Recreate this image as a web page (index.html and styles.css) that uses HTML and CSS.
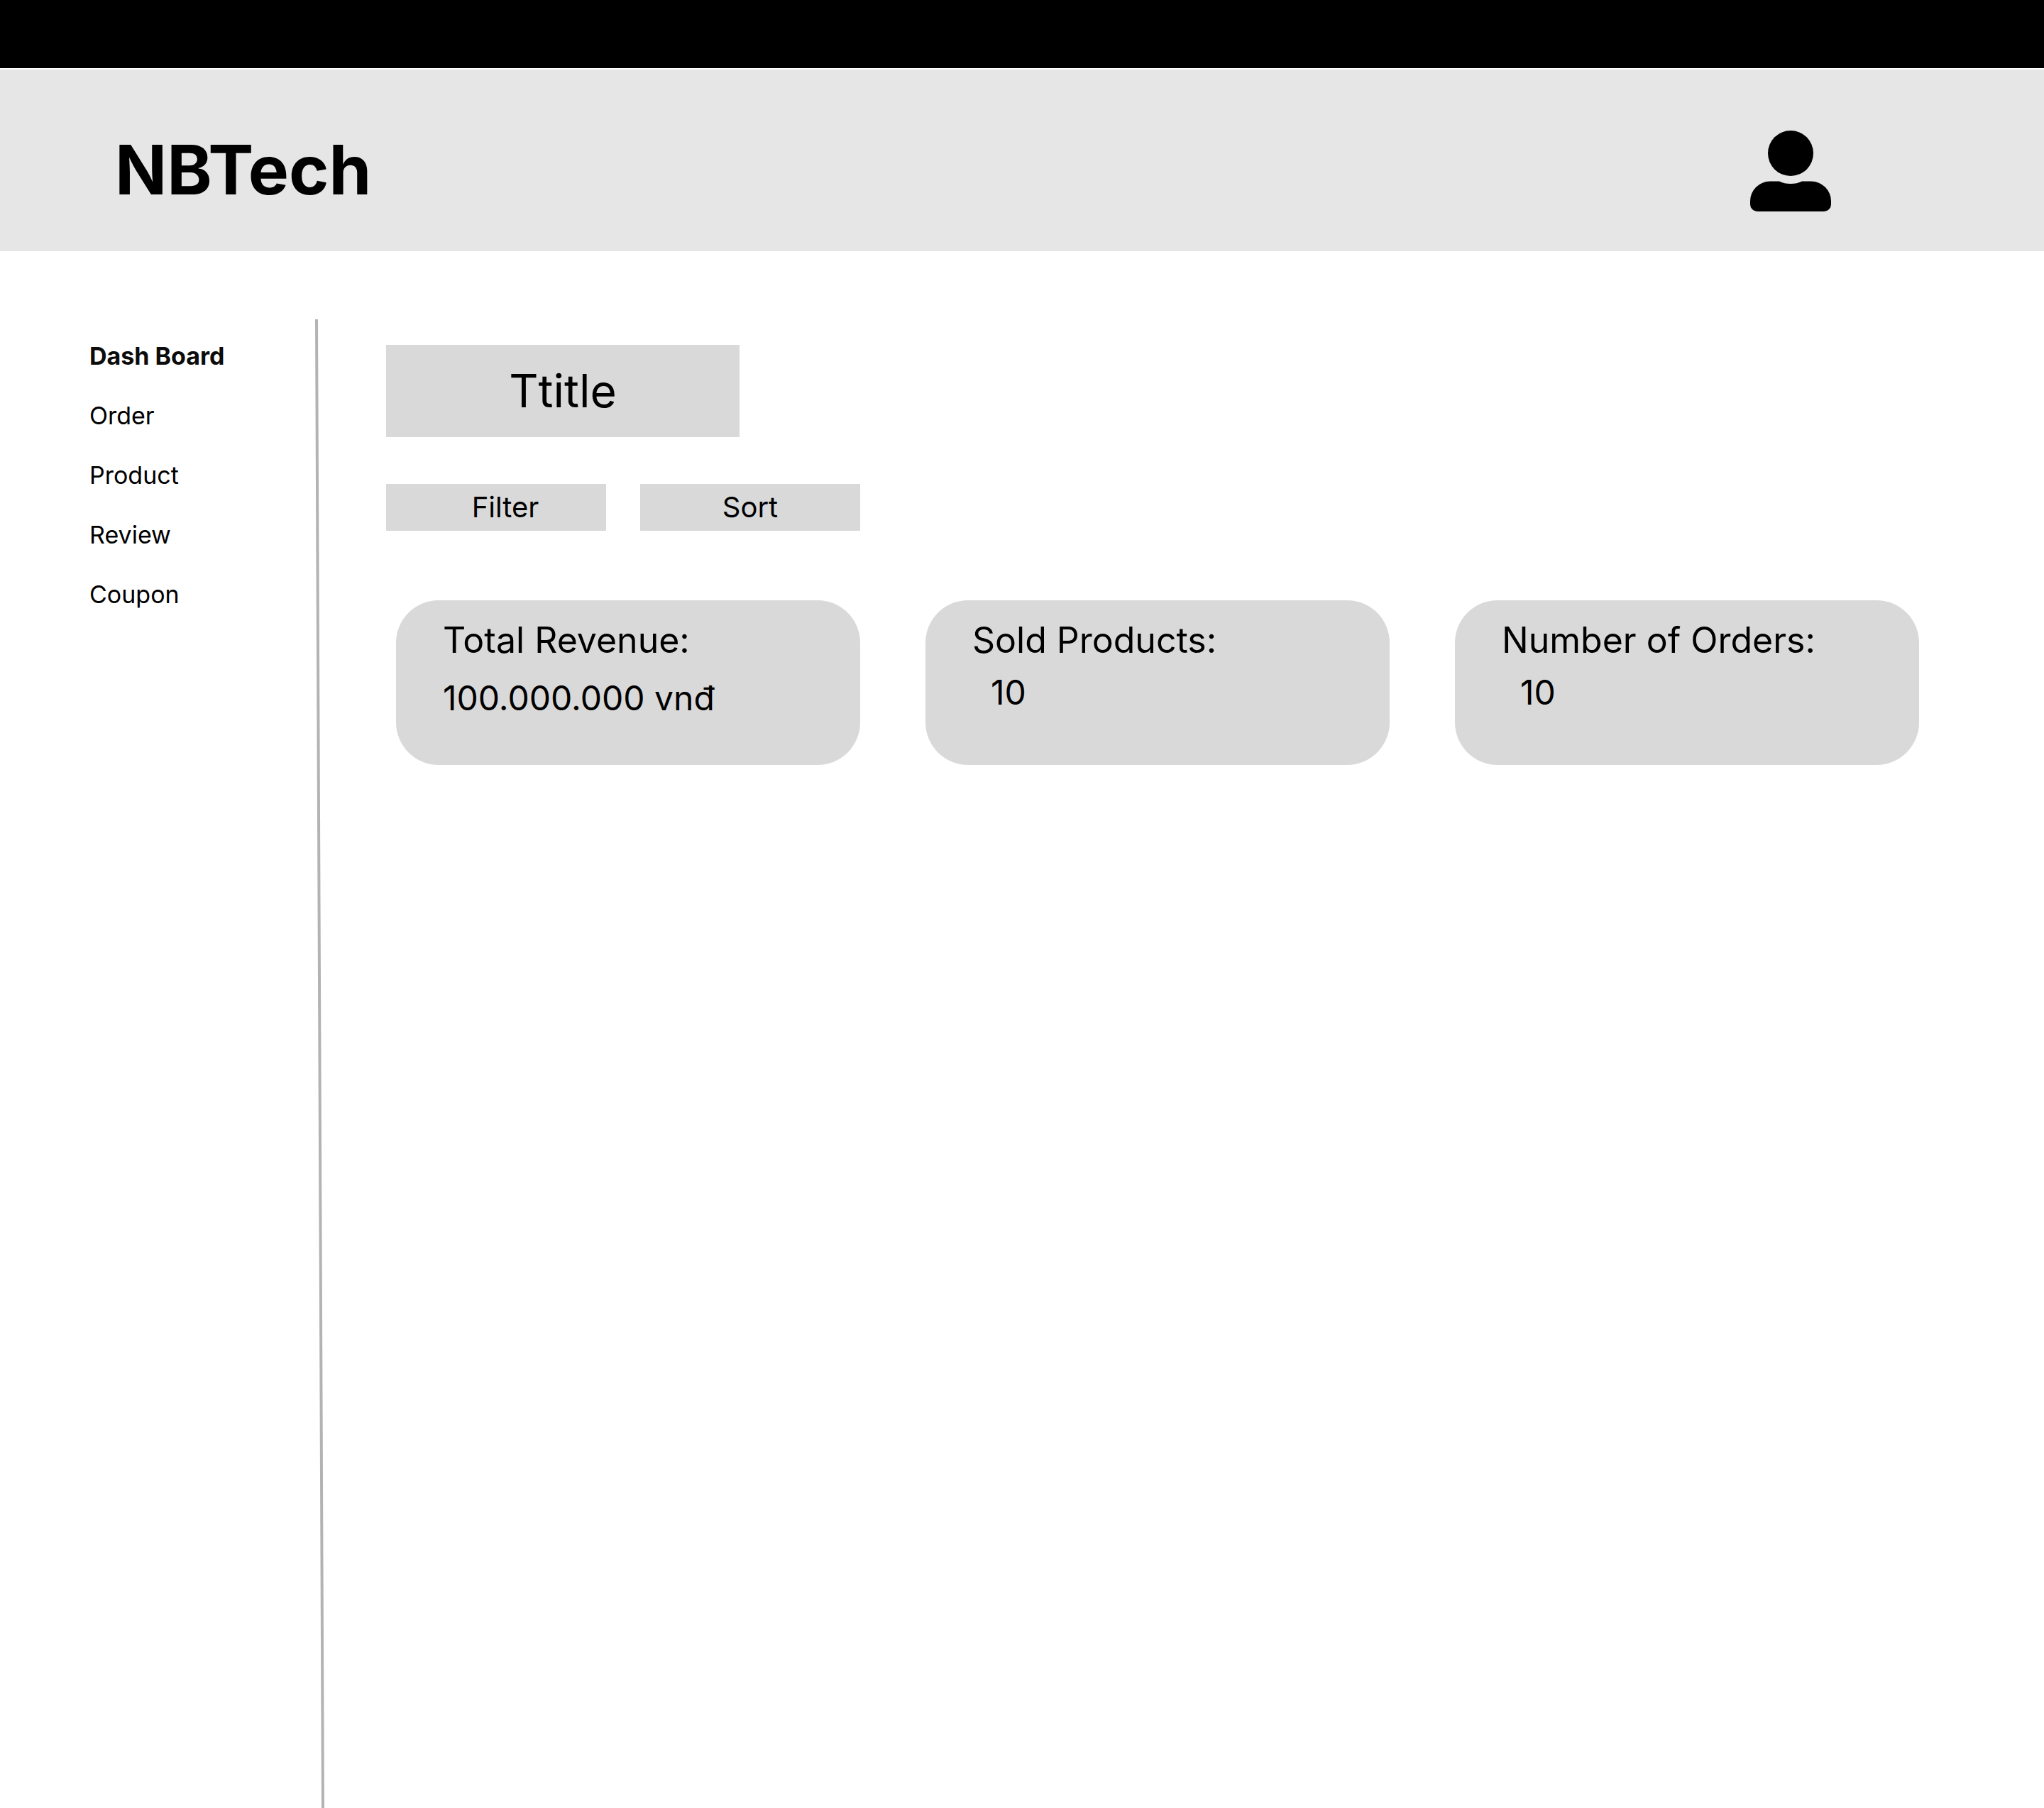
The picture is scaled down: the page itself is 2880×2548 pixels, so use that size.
FILE: index.html
```html
<!DOCTYPE html>
<html lang="en">
<head>
  <meta charset="utf-8">
  <meta name="viewport" content="width=device-width, initial-scale=1">
  <title>NBTech</title>
  <link rel="stylesheet" href="styles.css">
</head>
<body>
  <div class="topbar"></div>
  <header class="header">
    <a class="brand" href="#">NBTech</a>
    <button class="account" type="button" aria-label="Account">
      <svg class="account-icon" viewBox="0 0 114 114" aria-hidden="true">
        <circle cx="57" cy="32" r="32"/>
        <path d="M28 71.500H41Q48 75 57 75T73 71.500H86A28 28 0 0 1 114 99.500V104A10 10 0 0 1 104 114H10A10 10 0 0 1 0 104V99.500A28 28 0 0 1 28 71.500Z"/>
      </svg>
    </button>
  </header>

  <div class="layout">
    <nav class="sidebar">
      <a class="nav-link nav-link--active" href="#" aria-current="page">Dash Board</a>
      <a class="nav-link" href="#">Order</a>
      <a class="nav-link" href="#">Product</a>
      <a class="nav-link" href="#">Review</a>
      <a class="nav-link" href="#">Coupon</a>
    </nav>
    <div class="divider"></div>
    <main class="main">
      <h1 class="title">Ttitle</h1>
      <div class="toolbar">
        <button class="tool tool--filter" type="button">Filter</button>
        <button class="tool" type="button">Sort</button>
      </div>
      <section class="stats">
        <article class="stat">
          <h2 class="stat-label">Total Revenue:</h2>
          <p class="stat-value">100.000.000 vnđ</p>
        </article>
        <article class="stat stat--count">
          <h2 class="stat-label">Sold Products:</h2>
          <p class="stat-value">10</p>
        </article>
        <article class="stat stat--count">
          <h2 class="stat-label">Number of Orders:</h2>
          <p class="stat-value">10</p>
        </article>
      </section>
    </main>
  </div>
</body>
</html>
```

FILE: styles.css
```css
* {
  box-sizing: border-box;
}

body {
  display: flex;
  flex-direction: column;
  min-height: 100vh;
  margin: 0;
  background: #fff;
  color: #000;
  font-family: Inter, "Liberation Sans", sans-serif;
}

h1,
h2,
p {
  margin: 0;
  font-weight: 400;
}

a {
  color: inherit;
  text-decoration: none;
}

button {
  border: 0;
  color: inherit;
  font-family: inherit;
}

.topbar {
  height: 96px;
  background: #000;
}

.header {
  display: flex;
  align-items: center;
  justify-content: space-between;
  height: 258px;
  padding: 26px 300px 0 162px;
  border-top: 2px solid #fff;
  background: #e6e6e6;
}

.brand {
  font-size: 96px;
  font-weight: 700;
  line-height: 116px;
}

.account {
  padding: 4px 0 0;
  background: none;
}

.account-icon {
  display: block;
  width: 114px;
  height: 114px;
}

.layout {
  display: flex;
  flex: 1;
  padding-top: 96px;
}

.sidebar {
  display: flex;
  flex: 0 0 444px;
  flex-direction: column;
  gap: 36px;
  padding: 28px 0 0 126px;
}

.nav-link {
  font-size: 34px;
  line-height: 48px;
}

.nav-link--active {
  color: #0c0c0c;
  font-weight: 700;
}

/* The rule leans slightly to the right on its way down. */
.divider {
  flex: 0 0 14px;
  background: #b3b3b3;
  clip-path: polygon(0 0, 4px 0, 13px 100%, 9px 100%);
}

.main {
  flex: 1;
  padding: 36px 176px 96px 86px;
}

.title {
  width: 498px;
  padding: 25px 0;
  background: #d9d9d9;
  font-size: 64px;
  font-kerning: none;
  line-height: 80px;
  text-align: center;
}

.toolbar {
  display: flex;
  gap: 48px;
  margin-top: 66px;
}

.tool {
  width: 310px;
  padding: 9px 0;
  background: #d9d9d9;
  font-size: 40px;
  line-height: 48px;
}

.tool--filter {
  padding-left: 26px;
}

.stats {
  display: grid;
  grid-template-columns: repeat(auto-fit, minmax(480px, 1fr));
  gap: 92px;
  margin: 98px 0 0 14px;
}

.stat {
  display: flex;
  flex-direction: column;
  gap: 10px;
  min-height: 232px;
  padding: 20px 40px 16px 66px;
  border-radius: 60px;
  background: #d9d9d9;
}

.stat-label {
  font-size: 50px;
  line-height: 72px;
}

.stat-value {
  font-size: 48px;
  line-height: 72px;
}

.stat--count {
  gap: 2px;
}

.stat--count .stat-value {
  padding-left: 26px;
}
```
